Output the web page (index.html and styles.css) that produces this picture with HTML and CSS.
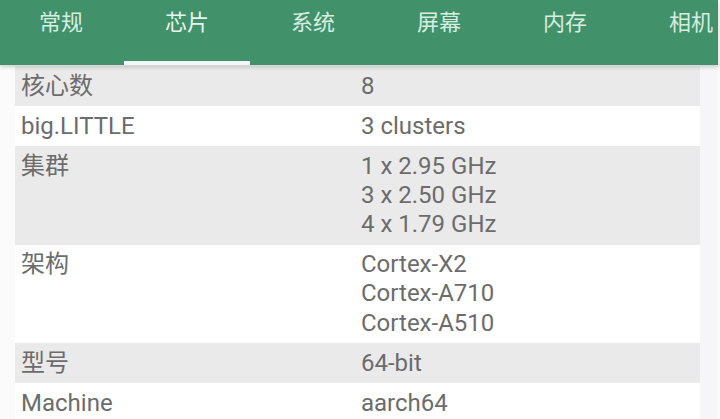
FILE: index.html
```html
<!DOCTYPE html>
<html lang="zh">
<head>
    <meta charset="UTF-8">
    <meta name="viewport" content="width=device-width, initial-scale=1.0">
    <title>芯片</title>
    <link rel="stylesheet" href="styles.css">
</head>
<body>
    <div class="tab-bar">
        <div class="tab">常规</div>
        <div class="tab active">芯片</div>
        <div class="tab">系统</div>
        <div class="tab">屏幕</div>
        <div class="tab">内存</div>
        <div class="tab">相机</div>
    </div>
    <div class="page">
        <div class="info-list">
            <div class="row">
                <div class="label">核心数</div>
                <div class="value">8</div>
            </div>
            <div class="row">
                <div class="label">big.LITTLE</div>
                <div class="value">3 clusters</div>
            </div>
            <div class="row">
                <div class="label">集群</div>
                <div class="value">1 x 2.95 GHz<br>3 x 2.50 GHz<br>4 x 1.79 GHz</div>
            </div>
            <div class="row">
                <div class="label">架构</div>
                <div class="value">Cortex-X2<br>Cortex-A710<br>Cortex-A510</div>
            </div>
            <div class="row">
                <div class="label">型号</div>
                <div class="value">64-bit</div>
            </div>
            <div class="row">
                <div class="label">Machine</div>
                <div class="value">aarch64</div>
            </div>
        </div>
        <div class="side-strip"></div>
    </div>
</body>
</html>
```

FILE: styles.css
```css
body {
    margin: 0;
    padding: 0;
    font-family: Roboto, "Noto Sans CJK SC", sans-serif;
    background-color: #fbfbfb;
    height: 419px;
    overflow: hidden;
}
.tab-bar {
    display: flex;
    height: 65px;
    width: 718px;
    background-color: #41926a;
    overflow: hidden;
    position: relative;
    z-index: 1;
    box-shadow: 0px 2px 4px rgba(0, 0, 0, 0.18);
}
.tab {
    flex: 0 0 126px;
    text-align: center;
    font-size: 22px;
    line-height: 46px;
    color: #d6ede0;
    box-sizing: border-box;
    height: 65px;
}
.tab:first-child {
    margin-left: -2px;
}
.tab.active {
    color: #e8f5ed;
    border-bottom: 4px solid #f4f7f5;
}
.page {
    display: flex;
    padding-left: 15px;
}
.info-list {
    width: 685px;
    padding-top: 1px;
}
.row {
    display: flex;
    padding: 5.5px 0 5.25px 6px;
    font-size: 24px;
    line-height: 29.25px;
    color: #6c6c6c;
}
.row:nth-child(odd) {
    background-color: #eaeaea;
}
.row:nth-child(even) {
    background-color: #ffffff;
}
.label {
    flex: 0 0 340px;
}
.value {
    flex: 1;
}
.side-strip {
    width: 18px;
    height: 360px;
    background-color: #f6f6f8;
}
```
